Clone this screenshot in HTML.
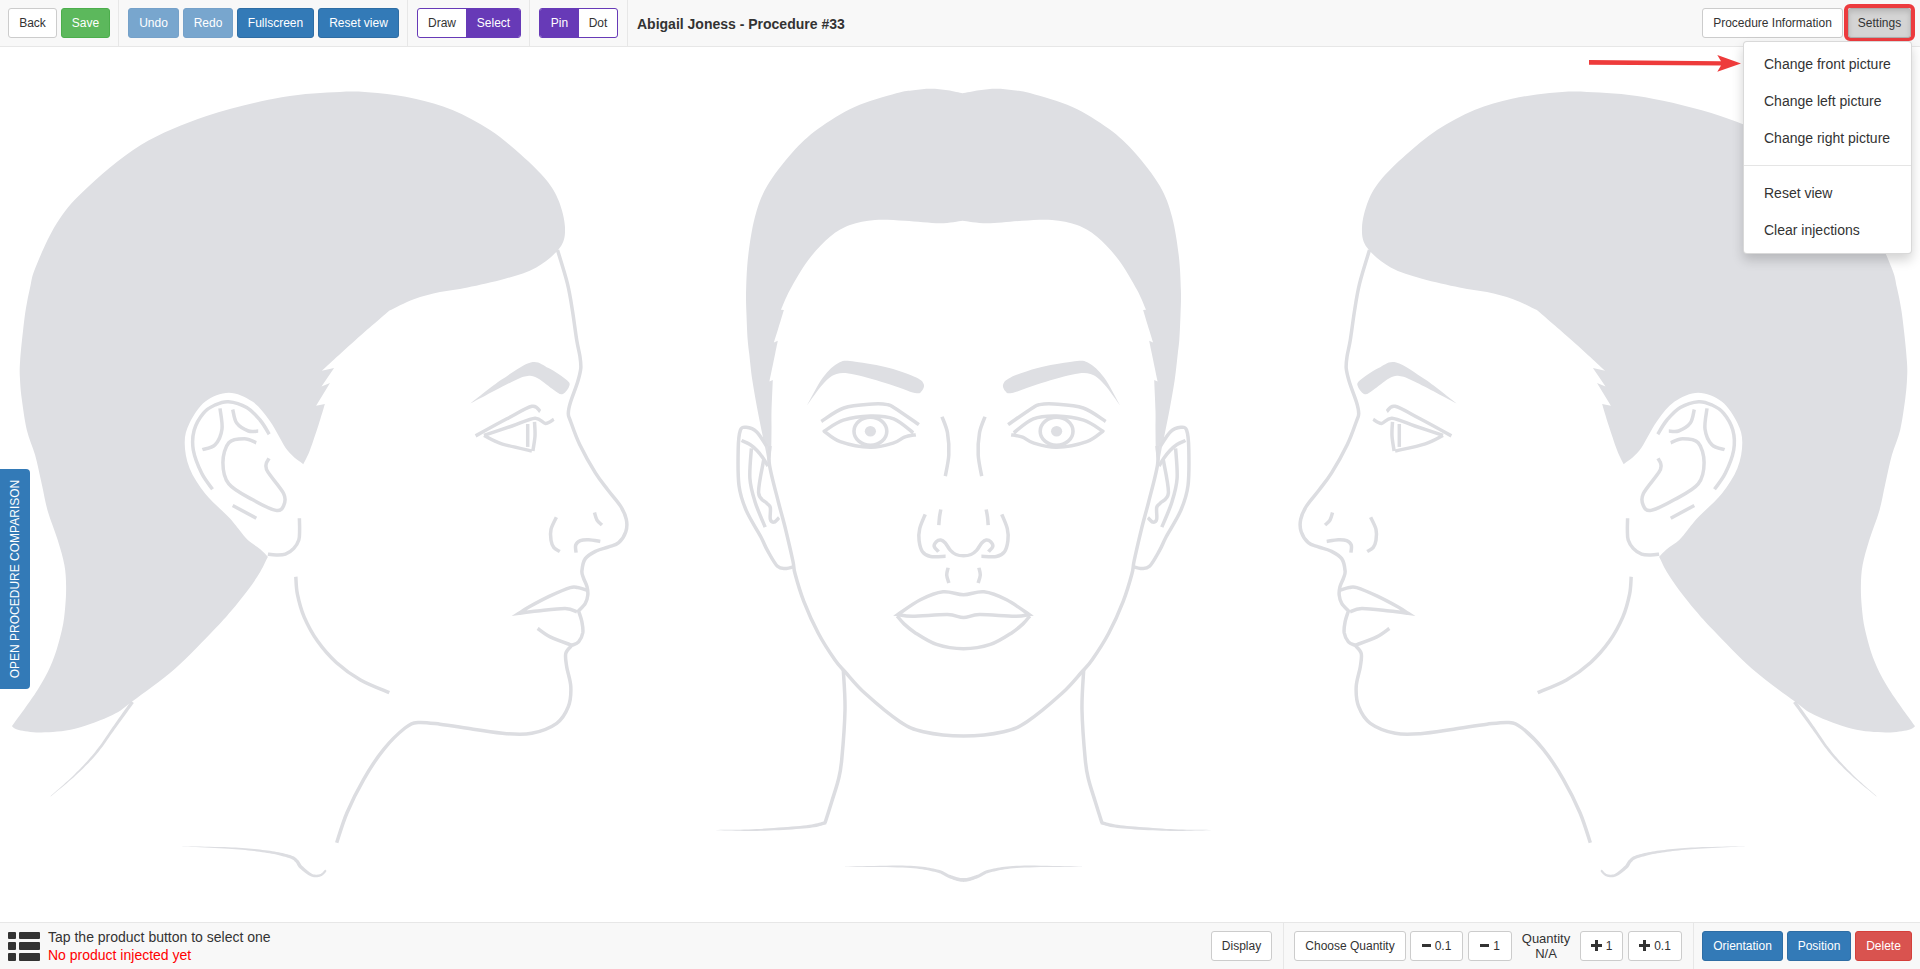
<!DOCTYPE html><html><head><meta charset="utf-8"><style>
*{box-sizing:border-box;margin:0;padding:0}
html,body{width:1920px;height:969px;overflow:hidden;background:#fff;font-family:"Liberation Sans",sans-serif;color:#333}
.bar{position:absolute;left:0;width:1920px;background:#f8f8f8}
.top{top:0;height:47px;border-bottom:1px solid #e7e7e7}
.bot{top:922px;height:47px;border-top:1px solid #e7e7e7}
.vd{position:absolute;top:0;width:1px;background:#e7e7e7}
.btn{position:absolute;height:30px;border:1px solid #ccc;border-radius:3px;background:#fff;color:#333;font-size:12px;line-height:28px;text-align:center;white-space:nowrap}
.g{background:#5cb85c;border-color:#4cae4c;color:#fff}
.p{background:#337ab7;border-color:#2e6da4;color:#fff}
.pd{background:#78a6ce;border-color:#75a1c9;color:#fff}
.r{background:#d9534f;border-color:#d43f3a;color:#fff}
.grp{position:absolute;height:30px;border:1px solid #673ab7;border-radius:3px;background:#fff;overflow:hidden;font-size:12px;line-height:28px}
.grp span{position:absolute;top:0;height:28px;text-align:center}
.pu{background:#673ab7;color:#fff}
.title{position:absolute;left:637px;top:16px;font-size:14px;font-weight:bold;color:#333;line-height:17px;white-space:nowrap}
.dd{position:absolute;left:1743px;top:41px;width:169px;height:213px;background:#fff;border:1px solid rgba(0,0,0,.15);border-radius:4px;box-shadow:0 6px 12px rgba(0,0,0,.175)}
.dd div{position:absolute;left:20px;font-size:14px;color:#333;white-space:nowrap;line-height:16px}
.dd hr{position:absolute;left:0;top:123px;width:167px;border:0;border-top:1px solid #e5e5e5}
.tab{position:absolute;left:0;top:469px;width:30px;height:220px;background:#337ab7;border-radius:0 4px 4px 0}
.tab span{position:absolute;left:15px;top:110px;transform:translate(-50%,-50%) rotate(-90deg);color:#fff;font-size:12px;white-space:nowrap;line-height:14px}
.ic{position:absolute;background:#333;border-radius:1px}
.glm{display:inline-block;width:9px;height:3px;background:#333;vertical-align:middle;position:relative;top:-1px;margin-right:4px}
.glp{display:inline-block;width:11px;height:11px;vertical-align:middle;position:relative;top:-1px;margin-right:4px;background:linear-gradient(#333,#333) center/3px 11px no-repeat,linear-gradient(#333,#333) center/11px 3px no-repeat}
</style></head><body>
<svg width="1920" height="969" viewBox="0 0 1920 969" style="position:absolute;left:0;top:0">
<g fill="none" stroke="#dcdde1" stroke-width="3.5" stroke-linecap="butt" stroke-linejoin="round">
<path fill="#dedfe3" stroke="none" d="M389.5 310.5 C383.8 315.4 366.6 330.2 355.3 340.2 C344 350.2 327.4 365.6 321.8 370.7 L334.1 367.9 L321.5 386.4 L330 383 L316.1 405.7 L324.9 404.1 C323.8 407.6 321 417.4 318.5 425 C316 432.6 312.5 443.4 310 450 C307.5 456.6 304.4 461.9 303.3 464.3 C300.7 462 293.2 457.8 287.6 450.6 C282.1 443.4 275.9 429.4 270 421.2 C264.1 413 259.3 406.4 252.4 401.6 C245.5 396.9 236.7 392.7 228.8 392.7 C221 392.7 211.8 396.5 205.3 401.6 C198.8 406.7 193 416.2 189.6 423.1 C186.2 430 184.7 435.2 184.7 442.7 C184.7 450.2 186.2 459.7 189.6 468.2 C193 476.7 198.8 485.5 205.3 493.7 C211.8 501.9 223.1 511.2 228.8 517.3 C234.5 523.3 236.2 526.2 239.4 530 C242.6 533.8 244.3 536.8 247.8 540 C251.3 543.2 257 546.4 260.3 549.2 C263.6 552 266.6 555.5 267.9 556.8 C266.6 559.3 263.6 566.2 260.3 571.8 C257 577.4 252.7 583.7 247.8 590.2 C242.9 596.7 236.8 604.4 231.1 611 C225.4 617.6 223.2 620.4 213.8 630 C204.5 639.6 188.6 656.9 175 668.8 C161.4 680.7 142.9 693.6 132.5 701.3 C122.1 709 122.1 710.4 112.5 715 C102.9 719.6 86.9 725.9 75 728.8 C63.1 731.7 50.7 732.3 41.3 732.5 C31.9 732.7 23.7 731 18.8 730 C13.9 729 13.1 726.9 11.9 726.3 C16.2 720.2 30.7 700.8 37.5 690 C44.3 679.2 48.4 671.3 52.5 661.3 C56.6 651.3 59.8 639.1 61.9 630 C64 620.9 64.5 614.2 65.2 606.9 C65.9 599.6 66.2 593 66.1 586 C66 579 65.8 572.8 64.4 565.1 C63 557.4 60.5 549 57.7 540 C54.9 531 50.4 520.3 47.7 511 C45.1 501.7 43.9 493.6 41.8 484.3 C39.7 475 37.6 464.2 35.1 455.1 C32.6 446.1 29 439.4 26.8 430 C24.6 420.6 22.9 407.2 21.7 398.5 C20.5 389.8 20.2 383.9 19.9 377.6 C19.6 371.3 19.6 368.7 20.1 360.9 C20.6 353.1 22 339.7 23 331 C24 322.3 24.7 315.7 25.9 308.5 C27.1 301.3 28.5 294.5 30.1 287.6 C31.7 280.7 31.3 277.6 35.7 267 C40.1 256.4 48.2 236.8 56.3 224 C64.4 211.2 70.4 203.3 84.5 190.2 C98.6 177 120.5 157.5 140.8 145.1 C161.2 132.7 183.1 124 206.6 116 C230.1 108 259.5 101.2 281.7 97.2 C303.9 93.2 324 92.6 340 91.9 C356 91.2 365 91.9 377.5 93.1 C390 94.2 402.5 96 415 98.8 C427.5 101.6 440 104.8 452.5 110 C465 115.2 478.5 122.5 490 130 C501.5 137.5 511.9 146.7 521.3 155 C530.7 163.3 540 172.3 546.3 180 C552.5 187.7 555.7 193.1 558.8 201 C561.9 208.9 564.8 219.8 565 227.5 C565.2 235.2 564.8 240.8 560 247.5 C555.2 254.2 545.5 262.3 536.3 267.5 C527.1 272.7 516.5 275.5 505 278.8 C493.5 282.1 478.3 285.3 467.5 287.5 C456.7 289.7 448.9 290.2 440 292.1 C431.1 294.1 422.2 296.1 413.8 299.2 C405.4 302.3 393.6 308.6 389.5 310.5Z"/>
<path fill="#dedfe3" stroke="none" d="M470.4 403.5 C475.6 399.5 491.6 386.5 501.7 379.6 C511.8 372.8 523 364.3 530.8 362.4 C538.6 360.5 542.4 365.1 548.5 368.1 C554.6 371.1 563.9 377.5 567.3 380.6 C570.7 383.7 569.8 384.6 568.9 386.9 C568 389.2 564.6 393.7 562.1 394.2 C559.6 394.7 557.8 392.6 553.8 390 C549.8 387.4 542.5 380.9 538.1 378.5 C533.8 376.1 532 375.4 527.7 375.9 C523.4 376.4 521.7 377.1 512.1 381.7 C502.6 386.3 477.3 399.9 470.4 403.5Z"/>
<path d="M212.5 489.2 C210.7 486.6 204.9 479.8 201.7 473.3 C198.5 466.8 194.6 457.2 193.3 450 C192.1 442.8 192.5 436.1 194.2 430 C195.9 423.9 199.8 417.5 203.3 413.3 C206.8 409.1 210.8 406.9 215 405 C219.2 403.1 223 401.3 228.3 401.7 C233.6 402.1 241.4 404.4 246.7 407.5 C252 410.6 256.2 415.6 260 420 C263.8 424.4 267.7 431.8 269.2 434.2" stroke-linejoin="miter" stroke-miterlimit="7"/>
<path d="M220 408.4 C220.3 411.8 222.8 422.9 222 429 C221.2 435.1 218.4 441.3 215.1 444.7 C211.8 448.1 204.5 448.8 202.4 449.6" stroke-linejoin="miter" stroke-miterlimit="7"/>
<path d="M232.7 409.4 C233.4 411.7 234.1 419.5 236.7 423.1 C239.3 426.7 244.8 429.7 248.4 431 C252 432.3 256.6 431 258.2 431" stroke-linejoin="miter" stroke-miterlimit="7"/>
<path d="M256.3 442.7 C254.3 442.1 249.1 438.8 244.5 438.8 C239.9 438.8 232.4 438.8 228.8 442.7 C225.2 446.6 222.9 455.5 222.9 462.4 C222.9 469.3 223.9 477.7 228.8 483.9 C233.7 490.1 244.6 495.2 252.4 499.6 C260.2 504 270.7 509.4 275.9 510.4 C281.1 511.4 282.4 508.3 283.7 505.5 C285 502.7 286.3 499.2 283.7 493.7 C281.1 488.1 270.9 477.1 268 472.2 C265.1 467.3 265.9 466.6 266.1 464.3 C266.3 462 268.5 459.4 269 458.4" stroke-linejoin="miter" stroke-miterlimit="7"/>
<path d="M232.7 505.5 L256.3 518.2" stroke-linejoin="miter" stroke-miterlimit="7"/>
<path d="M299.4 518.2 C299.4 520.2 299.7 526.4 299.6 530 C299.5 533.6 299.8 536.9 298.8 540 C297.8 543.1 296 546 293.8 548.4 C291.6 550.8 288.3 553.1 285.4 554.2 C282.5 555.3 279.1 555.1 276.2 555.1 C273.3 555.1 269.3 554.4 267.9 554.2" stroke-linejoin="miter" stroke-miterlimit="7"/>
<path d="M475.6 435.9 C480.8 433 497.5 423.7 506.9 418.8 C516.3 413.9 526.3 407.5 531.9 406.3 C537.5 405.1 538.8 410.6 540.2 411.5" stroke-linejoin="miter" stroke-miterlimit="7"/>
<path d="M484 435.4 C488.7 433.8 503.6 428.9 512.1 426 C520.6 423.1 529.5 418.6 535 418.2 C540.5 417.8 542.3 423.2 545.4 423.4 C548.5 423.6 552.4 420 553.8 419.3" stroke-linejoin="miter" stroke-miterlimit="7"/>
<path d="M484 435.4 C486.9 436.8 493.7 441.2 501.7 443.8 C509.7 446.4 526.9 449.8 531.9 451" stroke-linejoin="miter" stroke-miterlimit="7"/>
<path d="M527.7 424 L527.7 446.9" stroke-linejoin="miter" stroke-miterlimit="7"/>
<path d="M534.5 421.9 C534.6 424.2 535.3 431.1 535 436 C534.7 440.9 533.2 448.5 532.9 451" stroke-linejoin="miter" stroke-miterlimit="7"/>
<path d="M557.5 250 C559.2 255.6 565 273.6 567.5 283.8 C570 294 571 301.6 572.5 311 C574 320.4 575.5 332.6 576.7 340 C577.9 347.4 579.1 350.9 579.8 355.6 C580.5 360.3 581.1 363.8 580.8 368.1 C580.4 372.5 579.4 376 577.7 381.7 C576 387.4 572 397.2 570.4 402.5 C568.8 407.8 568.3 410.4 568.3 413.5 C568.3 416.6 568.5 415.6 570.4 420.8 C572.3 426 575.6 436.1 579.8 444.8 C584 453.5 590.7 465.4 595.4 472.9 C600.1 480.4 603.7 484.5 607.9 490 C612.1 495.5 617.3 501 620.4 505.9 C623.5 510.8 625.4 515 626.3 519.3 C627.2 523.6 627.1 527.9 625.8 531.8 C624.5 535.7 621.6 540.2 618.7 542.7 C615.9 545.2 612.5 545.5 608.7 546.9 C605 548.3 600.1 549 596.2 551 C592.3 553 587.7 555.3 585.3 558.6 C582.9 561.9 582.2 567.7 581.9 571 C581.6 574.3 582.8 575.8 583.6 578.4 C584.5 581 586.3 583.9 587 586.7 C587.7 589.5 588.1 592.3 587.8 595.1 C587.5 597.9 586.8 600.8 585.3 603.4 C583.8 606 579.7 609.7 578.6 611 C579.1 612.8 581.2 618.2 581.9 621.8 C582.6 625.4 583.3 629.4 582.8 632.7 C582.2 636.1 580.4 639.8 578.6 641.9 C576.8 644 573 644.7 571.9 645.3 C570.9 646.6 566.7 649.7 565.8 653.3 C564.9 656.9 565.9 661.1 566.7 666.7 C567.5 672.3 570.5 680 570.8 686.7 C571.1 693.4 570.6 700.6 568.3 706.7 C565.9 712.8 562.8 718.9 556.7 723.3 C550.6 727.7 540 731.6 531.7 733.3 C523.4 735 516.4 734.4 506.7 733.7 C497 733 484.4 730.8 473.3 729.2 C462.2 727.6 449.2 725.3 440 724.2 C430.8 723.1 423.8 721.9 418 722.5 C412.2 723.1 410.7 723.5 405 728 C399.3 732.5 390.6 740.8 383.7 749.3 C376.8 757.8 369.8 768.7 363.7 779.3 C357.6 789.9 351.5 802.1 347 812.7 C342.5 823.3 338.4 837.7 336.7 842.7" stroke-linejoin="miter" stroke-miterlimit="7"/>
<path d="M556.4 517.2 C555.5 519.2 551.9 525.5 551 529.3 C550.1 533.1 550.5 537.1 551 540.2 C551.5 543.3 552.4 545.8 553.9 547.7 C555.4 549.6 558.8 550.9 559.8 551.5" stroke-linejoin="miter" stroke-miterlimit="7"/>
<path d="M594.5 512.6 C594.9 513.9 595.8 518 597 520.1 C598.2 522.2 601.2 524.3 602 525.1" stroke-linejoin="miter" stroke-miterlimit="7"/>
<path d="M576.1 552.7 C576 551.5 575 547.2 575.7 545.2 C576.4 543.2 578.1 541.5 580.3 540.6 C582.4 539.7 585.3 539.6 588.6 539.7 C591.9 539.8 598.3 541.1 600.3 541.4" stroke-linejoin="miter" stroke-miterlimit="7"/>
<path d="M586.5 590.1 C585 589.7 580.5 588 577.8 587.6 C575.1 587.2 574.8 586.2 570.2 587.6 C565.6 589 557 592.7 550.2 595.9 C543.4 599.1 534.5 603.9 529.3 606.8 C524.1 609.7 520.7 612.2 519 613.3 C522.1 612.9 529.9 611.8 537.6 611 C545.3 610.2 558.7 608.4 565.2 608.5 C571.8 608.6 575 611.2 576.9 611.8" stroke-linejoin="miter" stroke-miterlimit="7"/>
<path d="M537.6 628.5 C539.7 629.9 544.9 634.2 550.2 636.9 C555.5 639.5 565.6 643 569.4 644.4 C573.1 645.8 572.2 645.1 572.7 645.3" stroke-linejoin="miter" stroke-miterlimit="7"/>
<path d="M295.8 576.7 C296.1 579.6 296 587.4 297.4 594.1 C298.8 600.8 300.8 609.1 304.1 616.9 C307.5 624.7 312.1 633.5 317.5 641.1 C322.9 648.7 329.1 656 336.3 662.5 C343.5 669 351.7 675 360.5 680 C369.3 685 384.5 690.6 389.3 692.7" stroke-linejoin="miter" stroke-miterlimit="7"/>
<path fill="#dcdde1" stroke="none" d="M131.1 700.9 L130.3 702.1 L129.2 703.6 L128 705.3 L126.7 707.2 L125.2 709.3 L123.6 711.5 L122 713.8 L120.3 716.2 L118.6 718.6 L116.9 720.9 L115.3 723.2 L113.8 725.4 L112.3 727.6 L110.8 729.8 L109.3 732 L107.8 734.2 L106.2 736.5 L104.7 738.7 L103.2 741 L101.7 743.2 L100.1 745.4 L98.5 747.5 L96.9 749.6 L95.3 751.7 L93.7 753.7 L92 755.7 L90.4 757.6 L88.7 759.6 L87 761.5 L85.3 763.3 L83.5 765.2 L81.8 767.1 L80 768.9 L78.2 770.8 L76.3 772.6 L74.5 774.5 L72.5 776.4 L70.4 778.4 L68.2 780.5 L65.8 782.6 L63.5 784.7 L61.2 786.7 L59 788.7 L56.8 790.6 L54.9 792.3 L53.2 793.8 L51.7 795.1 L50.5 796.2 L50.7 796.4 L51.9 795.4 L53.4 794.2 L55.2 792.7 L57.2 791.1 L59.4 789.3 L61.7 787.4 L64.1 785.4 L66.5 783.4 L68.9 781.3 L71.3 779.3 L73.5 777.4 L75.5 775.5 L77.4 773.7 L79.3 772 L81.2 770.2 L83.1 768.4 L84.9 766.6 L86.7 764.8 L88.6 762.9 L90.3 761.1 L92.1 759.2 L93.9 757.3 L95.6 755.3 L97.3 753.3 L99 751.3 L100.6 749.1 L102.3 747 L103.9 744.8 L105.5 742.6 L107 740.3 L108.6 738.1 L110.1 735.8 L111.7 733.6 L113.2 731.4 L114.7 729.3 L116.2 727.2 L117.8 725 L119.4 722.7 L121.1 720.4 L122.9 718.1 L124.6 715.7 L126.2 713.4 L127.8 711.2 L129.3 709.1 L130.7 707.2 L132 705.5 L133 704.1 L133.9 702.9Z"/>
<path fill="#dcdde1" stroke="none" d="M182.4 846.5 L184.8 846.6 L188 846.7 L191.6 846.9 L195.8 847.1 L200.3 847.3 L205 847.5 L209.8 847.7 L214.7 847.9 L219.4 848.2 L224 848.4 L228.2 848.7 L232 848.9 L235.4 849.2 L238.8 849.5 L242.1 849.8 L245.3 850.1 L248.3 850.4 L251.3 850.7 L254.2 851.1 L257 851.4 L259.7 851.8 L262.3 852.2 L264.8 852.5 L267.2 852.9 L269.6 853.3 L271.8 853.7 L274 854.1 L276.1 854.6 L278.1 855 L280 855.5 L281.7 855.9 L283.4 856.4 L285 856.8 L286.5 857.3 L287.9 857.7 L289.1 858.1 L290.2 858.5 L291.1 858.8 L291.8 859.2 L292.4 859.5 L292.9 859.8 L293.3 860 L293.6 860.3 L294 860.6 L294.3 861 L294.7 861.4 L295.1 861.8 L295.5 862.2 L295.9 862.6 L296.1 862.9 L296.4 863.3 L296.6 863.7 L296.9 864.2 L297.1 864.7 L297.4 865.3 L297.8 865.9 L298.2 866.5 L298.6 867.2 L299.2 867.8 L299.9 868.5 L300.6 869.1 L301.4 869.8 L302.2 870.5 L303.2 871.3 L304.1 872.1 L305.1 872.8 L306.1 873.6 L307.2 874.3 L308.2 875 L309.2 875.6 L310.2 876.1 L311.2 876.5 L312.1 876.8 L313 877.1 L313.9 877.2 L314.8 877.3 L315.7 877.3 L316.5 877.3 L317.4 877.2 L318.2 877.1 L318.9 876.9 L319.6 876.8 L320.3 876.6 L321 876.3 L321.7 876 L322.4 875.6 L323 875.1 L323.6 874.6 L324.1 874 L324.6 873.5 L325.1 872.9 L325.5 872.4 L325.8 872 L326.1 871.5 L326.4 871.2 L326.6 871 L325.2 869.6 L324.9 869.9 L324.6 870.2 L324.2 870.6 L323.8 871.1 L323.4 871.5 L323 872 L322.5 872.5 L322.1 872.9 L321.6 873.3 L321.1 873.6 L320.7 873.9 L320.2 874.1 L319.6 874.2 L319 874.4 L318.4 874.5 L317.8 874.6 L317.1 874.7 L316.4 874.7 L315.7 874.7 L315 874.6 L314.3 874.5 L313.6 874.4 L312.9 874.2 L312.2 873.9 L311.5 873.5 L310.7 873 L309.9 872.5 L309 871.8 L308 871.1 L307.1 870.3 L306.2 869.6 L305.3 868.8 L304.5 868 L303.7 867.2 L303 866.5 L302.3 865.9 L301.8 865.4 L301.4 864.9 L301.1 864.5 L300.8 864 L300.5 863.5 L300.2 863 L299.9 862.5 L299.6 862 L299.3 861.4 L298.9 860.9 L298.4 860.3 L297.9 859.8 L297.4 859.4 L297 859 L296.6 858.6 L296.2 858.2 L295.8 857.8 L295.2 857.4 L294.6 857 L294 856.6 L293.2 856.2 L292.3 855.9 L291.3 855.5 L290.1 855.1 L288.8 854.7 L287.3 854.3 L285.8 853.9 L284.2 853.5 L282.4 853.1 L280.6 852.7 L278.6 852.3 L276.6 851.9 L274.5 851.5 L272.3 851.2 L270 850.8 L267.6 850.5 L265.1 850.2 L262.6 849.9 L259.9 849.6 L257.2 849.3 L254.4 849 L251.5 848.8 L248.5 848.5 L245.4 848.3 L242.2 848 L238.9 847.8 L235.5 847.6 L232 847.5 L228.2 847.3 L224 847.1 L219.5 847 L214.7 846.9 L209.8 846.8 L205 846.7 L200.3 846.6 L195.8 846.5 L191.7 846.5 L188 846.4 L184.8 846.3 L182.4 846.3Z"/>
<g transform="translate(1927.0,0) scale(-1,1)">
<path fill="#dedfe3" stroke="none" d="M389.5 310.5 C383.8 315.4 366.6 330.2 355.3 340.2 C344 350.2 327.4 365.6 321.8 370.7 L334.1 367.9 L321.5 386.4 L330 383 L316.1 405.7 L324.9 404.1 C323.8 407.6 321 417.4 318.5 425 C316 432.6 312.5 443.4 310 450 C307.5 456.6 304.4 461.9 303.3 464.3 C300.7 462 293.2 457.8 287.6 450.6 C282.1 443.4 275.9 429.4 270 421.2 C264.1 413 259.3 406.4 252.4 401.6 C245.5 396.9 236.7 392.7 228.8 392.7 C221 392.7 211.8 396.5 205.3 401.6 C198.8 406.7 193 416.2 189.6 423.1 C186.2 430 184.7 435.2 184.7 442.7 C184.7 450.2 186.2 459.7 189.6 468.2 C193 476.7 198.8 485.5 205.3 493.7 C211.8 501.9 223.1 511.2 228.8 517.3 C234.5 523.3 236.2 526.2 239.4 530 C242.6 533.8 244.3 536.8 247.8 540 C251.3 543.2 257 546.4 260.3 549.2 C263.6 552 266.6 555.5 267.9 556.8 C266.6 559.3 263.6 566.2 260.3 571.8 C257 577.4 252.7 583.7 247.8 590.2 C242.9 596.7 236.8 604.4 231.1 611 C225.4 617.6 223.2 620.4 213.8 630 C204.5 639.6 188.6 656.9 175 668.8 C161.4 680.7 142.9 693.6 132.5 701.3 C122.1 709 122.1 710.4 112.5 715 C102.9 719.6 86.9 725.9 75 728.8 C63.1 731.7 50.7 732.3 41.3 732.5 C31.9 732.7 23.7 731 18.8 730 C13.9 729 13.1 726.9 11.9 726.3 C16.2 720.2 30.7 700.8 37.5 690 C44.3 679.2 48.4 671.3 52.5 661.3 C56.6 651.3 59.8 639.1 61.9 630 C64 620.9 64.5 614.2 65.2 606.9 C65.9 599.6 66.2 593 66.1 586 C66 579 65.8 572.8 64.4 565.1 C63 557.4 60.5 549 57.7 540 C54.9 531 50.4 520.3 47.7 511 C45.1 501.7 43.9 493.6 41.8 484.3 C39.7 475 37.6 464.2 35.1 455.1 C32.6 446.1 29 439.4 26.8 430 C24.6 420.6 22.9 407.2 21.7 398.5 C20.5 389.8 20.2 383.9 19.9 377.6 C19.6 371.3 19.6 368.7 20.1 360.9 C20.6 353.1 22 339.7 23 331 C24 322.3 24.7 315.7 25.9 308.5 C27.1 301.3 28.5 294.5 30.1 287.6 C31.7 280.7 31.3 277.6 35.7 267 C40.1 256.4 48.2 236.8 56.3 224 C64.4 211.2 70.4 203.3 84.5 190.2 C98.6 177 120.5 157.5 140.8 145.1 C161.2 132.7 183.1 124 206.6 116 C230.1 108 259.5 101.2 281.7 97.2 C303.9 93.2 324 92.6 340 91.9 C356 91.2 365 91.9 377.5 93.1 C390 94.2 402.5 96 415 98.8 C427.5 101.6 440 104.8 452.5 110 C465 115.2 478.5 122.5 490 130 C501.5 137.5 511.9 146.7 521.3 155 C530.7 163.3 540 172.3 546.3 180 C552.5 187.7 555.7 193.1 558.8 201 C561.9 208.9 564.8 219.8 565 227.5 C565.2 235.2 564.8 240.8 560 247.5 C555.2 254.2 545.5 262.3 536.3 267.5 C527.1 272.7 516.5 275.5 505 278.8 C493.5 282.1 478.3 285.3 467.5 287.5 C456.7 289.7 448.9 290.2 440 292.1 C431.1 294.1 422.2 296.1 413.8 299.2 C405.4 302.3 393.6 308.6 389.5 310.5Z"/>
<path fill="#dedfe3" stroke="none" d="M470.4 403.5 C475.6 399.5 491.6 386.5 501.7 379.6 C511.8 372.8 523 364.3 530.8 362.4 C538.6 360.5 542.4 365.1 548.5 368.1 C554.6 371.1 563.9 377.5 567.3 380.6 C570.7 383.7 569.8 384.6 568.9 386.9 C568 389.2 564.6 393.7 562.1 394.2 C559.6 394.7 557.8 392.6 553.8 390 C549.8 387.4 542.5 380.9 538.1 378.5 C533.8 376.1 532 375.4 527.7 375.9 C523.4 376.4 521.7 377.1 512.1 381.7 C502.6 386.3 477.3 399.9 470.4 403.5Z"/>
<path d="M212.5 489.2 C210.7 486.6 204.9 479.8 201.7 473.3 C198.5 466.8 194.6 457.2 193.3 450 C192.1 442.8 192.5 436.1 194.2 430 C195.9 423.9 199.8 417.5 203.3 413.3 C206.8 409.1 210.8 406.9 215 405 C219.2 403.1 223 401.3 228.3 401.7 C233.6 402.1 241.4 404.4 246.7 407.5 C252 410.6 256.2 415.6 260 420 C263.8 424.4 267.7 431.8 269.2 434.2" stroke-linejoin="miter" stroke-miterlimit="7"/>
<path d="M220 408.4 C220.3 411.8 222.8 422.9 222 429 C221.2 435.1 218.4 441.3 215.1 444.7 C211.8 448.1 204.5 448.8 202.4 449.6" stroke-linejoin="miter" stroke-miterlimit="7"/>
<path d="M232.7 409.4 C233.4 411.7 234.1 419.5 236.7 423.1 C239.3 426.7 244.8 429.7 248.4 431 C252 432.3 256.6 431 258.2 431" stroke-linejoin="miter" stroke-miterlimit="7"/>
<path d="M256.3 442.7 C254.3 442.1 249.1 438.8 244.5 438.8 C239.9 438.8 232.4 438.8 228.8 442.7 C225.2 446.6 222.9 455.5 222.9 462.4 C222.9 469.3 223.9 477.7 228.8 483.9 C233.7 490.1 244.6 495.2 252.4 499.6 C260.2 504 270.7 509.4 275.9 510.4 C281.1 511.4 282.4 508.3 283.7 505.5 C285 502.7 286.3 499.2 283.7 493.7 C281.1 488.1 270.9 477.1 268 472.2 C265.1 467.3 265.9 466.6 266.1 464.3 C266.3 462 268.5 459.4 269 458.4" stroke-linejoin="miter" stroke-miterlimit="7"/>
<path d="M232.7 505.5 L256.3 518.2" stroke-linejoin="miter" stroke-miterlimit="7"/>
<path d="M299.4 518.2 C299.4 520.2 299.7 526.4 299.6 530 C299.5 533.6 299.8 536.9 298.8 540 C297.8 543.1 296 546 293.8 548.4 C291.6 550.8 288.3 553.1 285.4 554.2 C282.5 555.3 279.1 555.1 276.2 555.1 C273.3 555.1 269.3 554.4 267.9 554.2" stroke-linejoin="miter" stroke-miterlimit="7"/>
<path d="M475.6 435.9 C480.8 433 497.5 423.7 506.9 418.8 C516.3 413.9 526.3 407.5 531.9 406.3 C537.5 405.1 538.8 410.6 540.2 411.5" stroke-linejoin="miter" stroke-miterlimit="7"/>
<path d="M484 435.4 C488.7 433.8 503.6 428.9 512.1 426 C520.6 423.1 529.5 418.6 535 418.2 C540.5 417.8 542.3 423.2 545.4 423.4 C548.5 423.6 552.4 420 553.8 419.3" stroke-linejoin="miter" stroke-miterlimit="7"/>
<path d="M484 435.4 C486.9 436.8 493.7 441.2 501.7 443.8 C509.7 446.4 526.9 449.8 531.9 451" stroke-linejoin="miter" stroke-miterlimit="7"/>
<path d="M527.7 424 L527.7 446.9" stroke-linejoin="miter" stroke-miterlimit="7"/>
<path d="M534.5 421.9 C534.6 424.2 535.3 431.1 535 436 C534.7 440.9 533.2 448.5 532.9 451" stroke-linejoin="miter" stroke-miterlimit="7"/>
<path d="M557.5 250 C559.2 255.6 565 273.6 567.5 283.8 C570 294 571 301.6 572.5 311 C574 320.4 575.5 332.6 576.7 340 C577.9 347.4 579.1 350.9 579.8 355.6 C580.5 360.3 581.1 363.8 580.8 368.1 C580.4 372.5 579.4 376 577.7 381.7 C576 387.4 572 397.2 570.4 402.5 C568.8 407.8 568.3 410.4 568.3 413.5 C568.3 416.6 568.5 415.6 570.4 420.8 C572.3 426 575.6 436.1 579.8 444.8 C584 453.5 590.7 465.4 595.4 472.9 C600.1 480.4 603.7 484.5 607.9 490 C612.1 495.5 617.3 501 620.4 505.9 C623.5 510.8 625.4 515 626.3 519.3 C627.2 523.6 627.1 527.9 625.8 531.8 C624.5 535.7 621.6 540.2 618.7 542.7 C615.9 545.2 612.5 545.5 608.7 546.9 C605 548.3 600.1 549 596.2 551 C592.3 553 587.7 555.3 585.3 558.6 C582.9 561.9 582.2 567.7 581.9 571 C581.6 574.3 582.8 575.8 583.6 578.4 C584.5 581 586.3 583.9 587 586.7 C587.7 589.5 588.1 592.3 587.8 595.1 C587.5 597.9 586.8 600.8 585.3 603.4 C583.8 606 579.7 609.7 578.6 611 C579.1 612.8 581.2 618.2 581.9 621.8 C582.6 625.4 583.3 629.4 582.8 632.7 C582.2 636.1 580.4 639.8 578.6 641.9 C576.8 644 573 644.7 571.9 645.3 C570.9 646.6 566.7 649.7 565.8 653.3 C564.9 656.9 565.9 661.1 566.7 666.7 C567.5 672.3 570.5 680 570.8 686.7 C571.1 693.4 570.6 700.6 568.3 706.7 C565.9 712.8 562.8 718.9 556.7 723.3 C550.6 727.7 540 731.6 531.7 733.3 C523.4 735 516.4 734.4 506.7 733.7 C497 733 484.4 730.8 473.3 729.2 C462.2 727.6 449.2 725.3 440 724.2 C430.8 723.1 423.8 721.9 418 722.5 C412.2 723.1 410.7 723.5 405 728 C399.3 732.5 390.6 740.8 383.7 749.3 C376.8 757.8 369.8 768.7 363.7 779.3 C357.6 789.9 351.5 802.1 347 812.7 C342.5 823.3 338.4 837.7 336.7 842.7" stroke-linejoin="miter" stroke-miterlimit="7"/>
<path d="M556.4 517.2 C555.5 519.2 551.9 525.5 551 529.3 C550.1 533.1 550.5 537.1 551 540.2 C551.5 543.3 552.4 545.8 553.9 547.7 C555.4 549.6 558.8 550.9 559.8 551.5" stroke-linejoin="miter" stroke-miterlimit="7"/>
<path d="M594.5 512.6 C594.9 513.9 595.8 518 597 520.1 C598.2 522.2 601.2 524.3 602 525.1" stroke-linejoin="miter" stroke-miterlimit="7"/>
<path d="M576.1 552.7 C576 551.5 575 547.2 575.7 545.2 C576.4 543.2 578.1 541.5 580.3 540.6 C582.4 539.7 585.3 539.6 588.6 539.7 C591.9 539.8 598.3 541.1 600.3 541.4" stroke-linejoin="miter" stroke-miterlimit="7"/>
<path d="M586.5 590.1 C585 589.7 580.5 588 577.8 587.6 C575.1 587.2 574.8 586.2 570.2 587.6 C565.6 589 557 592.7 550.2 595.9 C543.4 599.1 534.5 603.9 529.3 606.8 C524.1 609.7 520.7 612.2 519 613.3 C522.1 612.9 529.9 611.8 537.6 611 C545.3 610.2 558.7 608.4 565.2 608.5 C571.8 608.6 575 611.2 576.9 611.8" stroke-linejoin="miter" stroke-miterlimit="7"/>
<path d="M537.6 628.5 C539.7 629.9 544.9 634.2 550.2 636.9 C555.5 639.5 565.6 643 569.4 644.4 C573.1 645.8 572.2 645.1 572.7 645.3" stroke-linejoin="miter" stroke-miterlimit="7"/>
<path d="M295.8 576.7 C296.1 579.6 296 587.4 297.4 594.1 C298.8 600.8 300.8 609.1 304.1 616.9 C307.5 624.7 312.1 633.5 317.5 641.1 C322.9 648.7 329.1 656 336.3 662.5 C343.5 669 351.7 675 360.5 680 C369.3 685 384.5 690.6 389.3 692.7" stroke-linejoin="miter" stroke-miterlimit="7"/>
<path fill="#dcdde1" stroke="none" d="M131.1 700.9 L130.3 702.1 L129.2 703.6 L128 705.3 L126.7 707.2 L125.2 709.3 L123.6 711.5 L122 713.8 L120.3 716.2 L118.6 718.6 L116.9 720.9 L115.3 723.2 L113.8 725.4 L112.3 727.6 L110.8 729.8 L109.3 732 L107.8 734.2 L106.2 736.5 L104.7 738.7 L103.2 741 L101.7 743.2 L100.1 745.4 L98.5 747.5 L96.9 749.6 L95.3 751.7 L93.7 753.7 L92 755.7 L90.4 757.6 L88.7 759.6 L87 761.5 L85.3 763.3 L83.5 765.2 L81.8 767.1 L80 768.9 L78.2 770.8 L76.3 772.6 L74.5 774.5 L72.5 776.4 L70.4 778.4 L68.2 780.5 L65.8 782.6 L63.5 784.7 L61.2 786.7 L59 788.7 L56.8 790.6 L54.9 792.3 L53.2 793.8 L51.7 795.1 L50.5 796.2 L50.7 796.4 L51.9 795.4 L53.4 794.2 L55.2 792.7 L57.2 791.1 L59.4 789.3 L61.7 787.4 L64.1 785.4 L66.5 783.4 L68.9 781.3 L71.3 779.3 L73.5 777.4 L75.5 775.5 L77.4 773.7 L79.3 772 L81.2 770.2 L83.1 768.4 L84.9 766.6 L86.7 764.8 L88.6 762.9 L90.3 761.1 L92.1 759.2 L93.9 757.3 L95.6 755.3 L97.3 753.3 L99 751.3 L100.6 749.1 L102.3 747 L103.9 744.8 L105.5 742.6 L107 740.3 L108.6 738.1 L110.1 735.8 L111.7 733.6 L113.2 731.4 L114.7 729.3 L116.2 727.2 L117.8 725 L119.4 722.7 L121.1 720.4 L122.9 718.1 L124.6 715.7 L126.2 713.4 L127.8 711.2 L129.3 709.1 L130.7 707.2 L132 705.5 L133 704.1 L133.9 702.9Z"/>
<path fill="#dcdde1" stroke="none" d="M182.4 846.5 L184.8 846.6 L188 846.7 L191.6 846.9 L195.8 847.1 L200.3 847.3 L205 847.5 L209.8 847.7 L214.7 847.9 L219.4 848.2 L224 848.4 L228.2 848.7 L232 848.9 L235.4 849.2 L238.8 849.5 L242.1 849.8 L245.3 850.1 L248.3 850.4 L251.3 850.7 L254.2 851.1 L257 851.4 L259.7 851.8 L262.3 852.2 L264.8 852.5 L267.2 852.9 L269.6 853.3 L271.8 853.7 L274 854.1 L276.1 854.6 L278.1 855 L280 855.5 L281.7 855.9 L283.4 856.4 L285 856.8 L286.5 857.3 L287.9 857.7 L289.1 858.1 L290.2 858.5 L291.1 858.8 L291.8 859.2 L292.4 859.5 L292.9 859.8 L293.3 860 L293.6 860.3 L294 860.6 L294.3 861 L294.7 861.4 L295.1 861.8 L295.5 862.2 L295.9 862.6 L296.1 862.9 L296.4 863.3 L296.6 863.7 L296.9 864.2 L297.1 864.7 L297.4 865.3 L297.8 865.9 L298.2 866.5 L298.6 867.2 L299.2 867.8 L299.9 868.5 L300.6 869.1 L301.4 869.8 L302.2 870.5 L303.2 871.3 L304.1 872.1 L305.1 872.8 L306.1 873.6 L307.2 874.3 L308.2 875 L309.2 875.6 L310.2 876.1 L311.2 876.5 L312.1 876.8 L313 877.1 L313.9 877.2 L314.8 877.3 L315.7 877.3 L316.5 877.3 L317.4 877.2 L318.2 877.1 L318.9 876.9 L319.6 876.8 L320.3 876.6 L321 876.3 L321.7 876 L322.4 875.6 L323 875.1 L323.6 874.6 L324.1 874 L324.6 873.5 L325.1 872.9 L325.5 872.4 L325.8 872 L326.1 871.5 L326.4 871.2 L326.6 871 L325.2 869.6 L324.9 869.9 L324.6 870.2 L324.2 870.6 L323.8 871.1 L323.4 871.5 L323 872 L322.5 872.5 L322.1 872.9 L321.6 873.3 L321.1 873.6 L320.7 873.9 L320.2 874.1 L319.6 874.2 L319 874.4 L318.4 874.5 L317.8 874.6 L317.1 874.7 L316.4 874.7 L315.7 874.7 L315 874.6 L314.3 874.5 L313.6 874.4 L312.9 874.2 L312.2 873.9 L311.5 873.5 L310.7 873 L309.9 872.5 L309 871.8 L308 871.1 L307.1 870.3 L306.2 869.6 L305.3 868.8 L304.5 868 L303.7 867.2 L303 866.5 L302.3 865.9 L301.8 865.4 L301.4 864.9 L301.1 864.5 L300.8 864 L300.5 863.5 L300.2 863 L299.9 862.5 L299.6 862 L299.3 861.4 L298.9 860.9 L298.4 860.3 L297.9 859.8 L297.4 859.4 L297 859 L296.6 858.6 L296.2 858.2 L295.8 857.8 L295.2 857.4 L294.6 857 L294 856.6 L293.2 856.2 L292.3 855.9 L291.3 855.5 L290.1 855.1 L288.8 854.7 L287.3 854.3 L285.8 853.9 L284.2 853.5 L282.4 853.1 L280.6 852.7 L278.6 852.3 L276.6 851.9 L274.5 851.5 L272.3 851.2 L270 850.8 L267.6 850.5 L265.1 850.2 L262.6 849.9 L259.9 849.6 L257.2 849.3 L254.4 849 L251.5 848.8 L248.5 848.5 L245.4 848.3 L242.2 848 L238.9 847.8 L235.5 847.6 L232 847.5 L228.2 847.3 L224 847.1 L219.5 847 L214.7 846.9 L209.8 846.8 L205 846.7 L200.3 846.6 L195.8 846.5 L191.7 846.5 L188 846.4 L184.8 846.3 L182.4 846.3Z"/>
</g>
<path fill="#dedfe3" stroke="none" d="M962.6 93.3 C960.1 92.8 953 91 947.7 90.2 C942.4 89.5 936.3 88.8 930.6 88.8 C924.9 88.8 919.3 89.5 913.6 90.2 C907.9 91 906.1 90.5 896.3 93.3 C886.5 96.1 867.6 101 854.6 106.9 C841.6 112.8 828.6 121.2 818.2 128.8 C807.8 136.4 800.6 143.2 792.1 152.7 C783.6 162.2 773.3 175.3 767.1 186 C760.9 196.7 758.1 205.2 755 216.7 C751.9 228.2 749.8 242.8 748.3 255 C746.8 267.2 746.4 280 746.1 290 C745.8 300 746.2 306.7 746.5 315 C746.8 323.3 747.2 333.6 747.7 340 C748.2 346.4 748.4 346.7 749.2 353.4 C750 360.1 750.9 370.6 752.3 380 C753.7 389.4 755.8 400.8 757.5 410 C759.2 419.2 761.1 428 762.5 435 C763.9 442 765 446.7 766 452 C767 457.3 768.1 464.5 768.5 467 C768.9 464.5 770.5 458.2 771 452 C771.5 445.8 771.4 436.8 771.5 430 C771.6 423.2 771.3 419.5 771.5 411.2 C771.7 402.9 772.6 385.3 772.8 380.1 L769.4 381.5 C770.4 376.8 773.8 360.2 775.2 353.4 C776.6 346.6 777.4 342.8 777.8 340.7 L773.9 342.5 C774.5 340.4 776.1 335.4 777.8 330 C779.5 324.6 782.9 313.3 783.9 310 L781 309.8 C782.5 306.5 785.4 298.3 789.9 290 C794.4 281.7 801.6 268.9 808.3 260 C815 251.1 823 242.5 830 236.7 C837 230.9 842.5 227.8 850 225 C857.5 222.2 865.8 220.7 875 220 C884.2 219.3 894.2 220.2 905 220.8 C915.8 221.4 930.4 223.3 940 223.3 C949.6 223.3 958.8 221.2 962.5 220.8 C966.6 221.2 977.1 223.3 987 223.3 C996.9 223.3 1011.2 221.4 1022 220.8 C1032.8 220.2 1042.8 219.3 1052 220 C1061.2 220.7 1069.5 222.2 1077 225 C1084.5 227.8 1090 230.9 1097 236.7 C1104 242.5 1112 251.1 1118.7 260 C1125.4 268.9 1132.5 281.7 1137.1 290 C1141.6 298.3 1144.5 306.5 1146 309.8 L1143.1 310 C1144.1 313.3 1147.5 324.6 1149.2 330 C1150.9 335.4 1152.4 340.4 1153.1 342.5 L1149.2 340.7 C1149.6 342.8 1150.4 346.6 1151.8 353.4 C1153.2 360.2 1156.6 376.8 1157.6 381.5 L1154.2 380.1 C1154.4 385.3 1155.3 402.9 1155.5 411.2 C1155.7 419.5 1155.4 423.2 1155.5 430 C1155.6 436.8 1155.5 445.8 1156 452 C1156.5 458.2 1158.1 464.5 1158.5 467 C1158.9 464.5 1160 457.3 1161 452 C1162 446.7 1163.1 442 1164.5 435 C1165.9 428 1167.8 419.2 1169.5 410 C1171.2 400.8 1173.3 389.4 1174.7 380 C1176.1 370.6 1177 360.1 1177.8 353.4 C1178.6 346.7 1178.8 346.4 1179.3 340 C1179.8 333.6 1180.2 323.3 1180.5 315 C1180.8 306.7 1181.2 300 1180.9 290 C1180.6 280 1180.2 267.2 1178.7 255 C1177.2 242.8 1175.1 228.2 1172 216.7 C1168.9 205.2 1166.1 196.7 1159.9 186 C1153.7 175.3 1143.4 162.2 1134.9 152.7 C1126.4 143.2 1119.2 136.4 1108.8 128.8 C1098.4 121.2 1085.4 112.8 1072.4 106.9 C1059.4 101 1040.5 96.1 1030.7 93.3 C1020.9 90.5 1019.1 91 1013.4 90.2 C1007.7 89.5 1002.1 88.8 996.4 88.8 C990.7 88.8 984.9 89.5 979.3 90.2 C973.7 91 965.4 92.8 962.6 93.3Z"/>
<path fill="#dedfe3" stroke="none" d="M806.7 405.8 C809.4 401.1 817.5 384.6 822.9 377.4 C828.3 370.2 833.8 365.1 839.2 362.5 C844.6 359.9 847 360.9 855.4 361.8 C863.8 362.7 879.1 365.3 889.3 367.9 C899.4 370.5 910.5 374.7 916.3 377.4 C922 380.1 922.9 381.9 923.8 384.2 C924.7 386.4 923.3 389.4 921.8 390.9 C920.3 392.4 920.4 394.1 915 393 C909.6 391.9 899.2 387.2 889.3 384.2 C879.4 381.1 864.2 376.4 855.4 374.7 C846.6 373 841.9 372.4 836.5 374 C831.1 375.6 827.9 378.9 822.9 384.2 C817.9 389.5 809.4 402.2 806.7 405.8Z"/>
<path d="M913.2 432.8 C910 430.5 900.8 421.7 893.7 418.9 C886.6 416.1 878.8 415.8 870.4 416 C862 416.2 851 417.7 843.3 420.2 C835.6 422.7 827.3 429.4 824.1 431.2 C826.8 432.9 832.5 438.9 840.2 441.6 C847.9 444.3 861.5 447.1 870.4 447.3 C879.3 447.5 888 444.6 893.7 442.9 C899.4 441.2 900.7 438.6 904.4 437.2 C908.1 435.8 913.9 435.1 915.8 434.7"/>
<ellipse cx="870.4" cy="431.2" rx="16.4" ry="14" stroke-width="3.6"/>
<ellipse cx="870.4" cy="431.2" rx="5.6" ry="5.2" fill="#dedfe3" stroke="none"/>
<path d="M766.7 446.3 C765 443.9 759.9 434.9 756.5 431.7 C753.1 428.5 748.9 427.6 746.2 427.3 C743.5 427.1 741.7 426.6 740.4 430.2 C739.1 433.8 738.4 440 738.2 449.2 C738 458.4 737.7 475.4 739 485.6 C740.3 495.8 742.6 501.9 746.2 510.4 C749.8 518.9 757.3 530.1 760.8 536.7 C764.3 543.3 764.5 545.3 767.3 550.2 C770.1 555.1 774.3 563.3 777.5 566.3 C780.7 569.3 783.8 568.3 786.3 568.4 C788.8 568.5 791.7 567.2 792.8 567"/>
<path d="M741.5 440.5 C742.9 441.2 747.4 442.8 750 444.5 C752.6 446.2 754.8 448.2 757 450.5 C759.2 452.8 761.2 455.4 763 458 C764.8 460.6 767.2 464.7 768 466"/>
<path d="M751.4 448.4 C751.1 453.4 749.3 469.4 749.9 478.3 C750.5 487.2 752.5 493.5 755 501.7 C757.5 509.9 763.5 523 765.2 527.2"/>
<path d="M763.8 459.4 C762.9 465 758.1 485.6 758.6 492.9 C759.1 500.2 764.8 500.7 766.7 503.1 C768.7 505.5 769.7 504.8 770.3 507.5 C770.9 510.2 769.7 516.8 770.3 519.2 C770.9 521.6 772.5 522.4 774 522.1 C775.5 521.9 778.2 518.4 779.1 517.7"/>
<path d="M821.3 421.4 C825 419.2 835.2 410.9 843.8 408 C852.4 405.1 865.6 404.6 872.9 404 C880.2 403.4 883.8 403.9 887.5 404.6 C891.2 405.3 889.8 404.9 895 408.2 C900.2 411.5 914.9 421.9 918.9 424.6"/>
<path d="M942 416.7 C942.9 419.4 946.4 426.5 947.5 432.9 C948.6 439.3 949.2 447.8 948.8 455 C948.4 462.2 945.9 472.6 945.3 476.1"/>
<path d="M925.2 514.3 C924.3 516.7 920.7 524.2 919.7 528.6 C918.7 533 918.6 536.9 919.1 540.8 C919.6 544.6 920.6 549.1 922.5 551.7 C924.4 554.3 926.8 555.7 930.6 556.5 C934.5 557.3 943.1 556.3 945.6 556.3"/>
<path d="M940.8 509.5 C940.6 510.8 939.8 514.4 939.5 517 C939.2 519.6 938.9 523.8 938.8 525.2"/>
<path d="M948.1 567.7 C947.9 568.9 946.6 572.5 946.7 575 C946.8 577.5 948.5 581.7 948.9 583"/>
<path d="M843.3 670 C843.6 676.7 845.3 695 845 710 C844.7 725 842.8 748.3 841.7 760 C840.6 771.7 840 773 838.3 780 C836.6 787 833.9 794.5 831.7 801.7 C829.5 808.9 826.1 819.5 825 823" stroke-linejoin="miter"/>
<path fill="#dcdde1" stroke="none" d="M825.6 820.9 L824.7 821.1 L823.8 821.4 L822.8 821.7 L821.6 822.1 L820.4 822.4 L819 822.8 L817.5 823.2 L815.8 823.6 L813.8 824 L811.7 824.4 L809.2 824.8 L806.5 825.2 L803.4 825.5 L799.9 825.9 L796.1 826.2 L792 826.6 L787.6 826.9 L783.1 827.3 L778.5 827.6 L773.9 828 L769.4 828.3 L765 828.6 L760.7 828.9 L756.7 829.1 L752.7 829.3 L748.6 829.5 L744.4 829.6 L740.1 829.7 L736 829.7 L731.9 829.8 L728 829.8 L724.3 829.8 L720.9 829.8 L717.9 829.9 L715.4 829.9 L713.3 829.9 L713.3 830.1 L715.4 830.1 L717.9 830.2 L720.9 830.3 L724.3 830.4 L728 830.5 L731.9 830.6 L735.9 830.7 L740.1 830.8 L744.4 830.9 L748.6 830.9 L752.7 830.9 L756.7 830.9 L760.8 830.8 L765.1 830.7 L769.5 830.5 L774.1 830.3 L778.7 830.2 L783.3 829.9 L787.8 829.7 L792.2 829.4 L796.3 829.1 L800.2 828.8 L803.7 828.5 L806.9 828.2 L809.7 827.9 L812.2 827.6 L814.4 827.2 L816.5 826.9 L818.3 826.5 L819.9 826.1 L821.3 825.7 L822.6 825.3 L823.7 825 L824.7 824.7 L825.6 824.5 L826.4 824.3Z"/>
<g transform="translate(1927.0,0) scale(-1,1)">
<path fill="#dedfe3" stroke="none" d="M806.7 405.8 C809.4 401.1 817.5 384.6 822.9 377.4 C828.3 370.2 833.8 365.1 839.2 362.5 C844.6 359.9 847 360.9 855.4 361.8 C863.8 362.7 879.1 365.3 889.3 367.9 C899.4 370.5 910.5 374.7 916.3 377.4 C922 380.1 922.9 381.9 923.8 384.2 C924.7 386.4 923.3 389.4 921.8 390.9 C920.3 392.4 920.4 394.1 915 393 C909.6 391.9 899.2 387.2 889.3 384.2 C879.4 381.1 864.2 376.4 855.4 374.7 C846.6 373 841.9 372.4 836.5 374 C831.1 375.6 827.9 378.9 822.9 384.2 C817.9 389.5 809.4 402.2 806.7 405.8Z"/>
<path d="M913.2 432.8 C910 430.5 900.8 421.7 893.7 418.9 C886.6 416.1 878.8 415.8 870.4 416 C862 416.2 851 417.7 843.3 420.2 C835.6 422.7 827.3 429.4 824.1 431.2 C826.8 432.9 832.5 438.9 840.2 441.6 C847.9 444.3 861.5 447.1 870.4 447.3 C879.3 447.5 888 444.6 893.7 442.9 C899.4 441.2 900.7 438.6 904.4 437.2 C908.1 435.8 913.9 435.1 915.8 434.7"/>
<ellipse cx="870.4" cy="431.2" rx="16.4" ry="14" stroke-width="3.6"/>
<ellipse cx="870.4" cy="431.2" rx="5.6" ry="5.2" fill="#dedfe3" stroke="none"/>
<path d="M766.7 446.3 C765 443.9 759.9 434.9 756.5 431.7 C753.1 428.5 748.9 427.6 746.2 427.3 C743.5 427.1 741.7 426.6 740.4 430.2 C739.1 433.8 738.4 440 738.2 449.2 C738 458.4 737.7 475.4 739 485.6 C740.3 495.8 742.6 501.9 746.2 510.4 C749.8 518.9 757.3 530.1 760.8 536.7 C764.3 543.3 764.5 545.3 767.3 550.2 C770.1 555.1 774.3 563.3 777.5 566.3 C780.7 569.3 783.8 568.3 786.3 568.4 C788.8 568.5 791.7 567.2 792.8 567"/>
<path d="M741.5 440.5 C742.9 441.2 747.4 442.8 750 444.5 C752.6 446.2 754.8 448.2 757 450.5 C759.2 452.8 761.2 455.4 763 458 C764.8 460.6 767.2 464.7 768 466"/>
<path d="M751.4 448.4 C751.1 453.4 749.3 469.4 749.9 478.3 C750.5 487.2 752.5 493.5 755 501.7 C757.5 509.9 763.5 523 765.2 527.2"/>
<path d="M763.8 459.4 C762.9 465 758.1 485.6 758.6 492.9 C759.1 500.2 764.8 500.7 766.7 503.1 C768.7 505.5 769.7 504.8 770.3 507.5 C770.9 510.2 769.7 516.8 770.3 519.2 C770.9 521.6 772.5 522.4 774 522.1 C775.5 521.9 778.2 518.4 779.1 517.7"/>
<path d="M821.3 421.4 C825 419.2 835.2 410.9 843.8 408 C852.4 405.1 865.6 404.6 872.9 404 C880.2 403.4 883.8 403.9 887.5 404.6 C891.2 405.3 889.8 404.9 895 408.2 C900.2 411.5 914.9 421.9 918.9 424.6"/>
<path d="M942 416.7 C942.9 419.4 946.4 426.5 947.5 432.9 C948.6 439.3 949.2 447.8 948.8 455 C948.4 462.2 945.9 472.6 945.3 476.1"/>
<path d="M925.2 514.3 C924.3 516.7 920.7 524.2 919.7 528.6 C918.7 533 918.6 536.9 919.1 540.8 C919.6 544.6 920.6 549.1 922.5 551.7 C924.4 554.3 926.8 555.7 930.6 556.5 C934.5 557.3 943.1 556.3 945.6 556.3"/>
<path d="M940.8 509.5 C940.6 510.8 939.8 514.4 939.5 517 C939.2 519.6 938.9 523.8 938.8 525.2"/>
<path d="M948.1 567.7 C947.9 568.9 946.6 572.5 946.7 575 C946.8 577.5 948.5 581.7 948.9 583"/>
<path d="M843.3 670 C843.6 676.7 845.3 695 845 710 C844.7 725 842.8 748.3 841.7 760 C840.6 771.7 840 773 838.3 780 C836.6 787 833.9 794.5 831.7 801.7 C829.5 808.9 826.1 819.5 825 823" stroke-linejoin="miter"/>
<path fill="#dcdde1" stroke="none" d="M825.6 820.9 L824.7 821.1 L823.8 821.4 L822.8 821.7 L821.6 822.1 L820.4 822.4 L819 822.8 L817.5 823.2 L815.8 823.6 L813.8 824 L811.7 824.4 L809.2 824.8 L806.5 825.2 L803.4 825.5 L799.9 825.9 L796.1 826.2 L792 826.6 L787.6 826.9 L783.1 827.3 L778.5 827.6 L773.9 828 L769.4 828.3 L765 828.6 L760.7 828.9 L756.7 829.1 L752.7 829.3 L748.6 829.5 L744.4 829.6 L740.1 829.7 L736 829.7 L731.9 829.8 L728 829.8 L724.3 829.8 L720.9 829.8 L717.9 829.9 L715.4 829.9 L713.3 829.9 L713.3 830.1 L715.4 830.1 L717.9 830.2 L720.9 830.3 L724.3 830.4 L728 830.5 L731.9 830.6 L735.9 830.7 L740.1 830.8 L744.4 830.9 L748.6 830.9 L752.7 830.9 L756.7 830.9 L760.8 830.8 L765.1 830.7 L769.5 830.5 L774.1 830.3 L778.7 830.2 L783.3 829.9 L787.8 829.7 L792.2 829.4 L796.3 829.1 L800.2 828.8 L803.7 828.5 L806.9 828.2 L809.7 827.9 L812.2 827.6 L814.4 827.2 L816.5 826.9 L818.3 826.5 L819.9 826.1 L821.3 825.7 L822.6 825.3 L823.7 825 L824.7 824.7 L825.6 824.5 L826.4 824.3Z"/>
</g>
<path d="M770 446 C769.9 449.2 768.1 455.7 769.5 465 C770.9 474.3 775.6 491 778.3 501.7 C781 512.4 783.2 519.5 785.6 529.4 C788 539.3 791.3 553.6 792.9 561 C794.5 568.4 793.2 566.8 795 573.5 C796.8 580.2 799.9 591.3 803.8 601.3 C807.7 611.3 813.1 623.5 818.3 633.3 C823.5 643.1 830.5 653.6 835 660 C839.5 666.4 840 666.2 845 671.7 C850 677.2 855.8 685 865 693.3 C874.2 701.6 890.3 715.3 900 721.7 C909.7 728.1 912.7 729.3 923.3 731.7 C933.9 734.1 950.1 736 963.5 736 C976.9 736 993.1 734.1 1003.7 731.7 C1014.3 729.3 1017.3 728.1 1027 721.7 C1036.7 715.3 1052.8 701.6 1062 693.3 C1071.2 685 1077 677.2 1082 671.7 C1087 666.2 1087.5 666.4 1092 660 C1096.5 653.6 1103.5 643.1 1108.7 633.3 C1113.9 623.5 1119.3 611.3 1123.2 601.3 C1127.1 591.3 1130.2 580.2 1132 573.5 C1133.8 566.8 1132.5 568.4 1134.1 561 C1135.7 553.6 1139 539.3 1141.4 529.4 C1143.8 519.5 1146 512.4 1148.7 501.7 C1151.4 491 1156.1 474.3 1157.5 465 C1158.9 455.7 1157.1 449.2 1157 446"/>
<path d="M938.5 551.7 C937.8 550.8 934.6 548.2 934.2 546.5 C933.8 544.8 935.2 542.8 936.3 541.7 C937.4 540.6 939.3 539.8 940.8 540 C942.3 540.2 943.7 541.3 945.3 543 C946.9 544.7 948.6 548.5 950.4 550.4 C952.2 552.3 953.8 553.6 956 554.5 C958.2 555.4 961 555.8 963.5 555.8 C966 555.8 968.8 555.4 971 554.5 C973.2 553.6 974.8 552.3 976.6 550.4 C978.4 548.5 980.1 544.7 981.7 543 C983.3 541.3 984.7 540.2 986.2 540 C987.7 539.8 989.6 540.6 990.7 541.7 C991.8 542.8 993.2 544.8 992.8 546.5 C992.4 548.2 989.2 550.8 988.5 551.7"/>
<path d="M897.2 616 C898.3 617.3 900.9 620.9 903.8 623.6 C906.7 626.3 909.2 628.9 914.7 632.4 C920.2 635.9 928.5 641.7 936.6 644.4 C944.7 647.1 954.5 648.7 963.5 648.7 C972.5 648.7 982.3 647.1 990.4 644.4 C998.5 641.7 1006.8 635.9 1012.3 632.4 C1017.8 628.9 1020.3 626.3 1023.2 623.6 C1026.1 620.9 1028.7 617.3 1029.8 616"/>
<path d="M898 614.5 C901.7 612 912.9 603.6 920.4 599.8 C927.9 596 935.8 592.6 943 591.8 C950.2 590.9 956.7 594.7 963.5 594.7 C970.3 594.7 976.8 590.9 984 591.8 C991.2 592.6 999.1 596 1006.6 599.8 C1014.1 603.6 1025.3 612 1029 614.5 C1026.6 614.8 1022.8 616.3 1014.5 616.3 C1006.2 616.3 988 614.4 979.5 614.6 C971 614.8 968.8 617.5 963.5 617.5 C958.2 617.5 956 614.8 947.5 614.6 C939 614.4 920.8 616.3 912.5 616.3 C904.2 616.3 900.4 614.8 898 614.5Z" stroke-linejoin="miter" stroke-miterlimit="7"/>
<path fill="#dcdde1" stroke="none" d="M845 866.8 L848.1 866.8 L852.1 866.9 L856.8 866.9 L862.2 866.9 L867.9 866.9 L874 867 L880.1 867 L886.2 867.1 L892.1 867.2 L897.5 867.4 L902.4 867.5 L906.7 867.7 L910.3 868 L913.6 868.3 L916.7 868.6 L919.5 868.9 L922.1 869.3 L924.5 869.7 L926.8 870.1 L928.9 870.5 L930.8 870.9 L932.7 871.4 L934.6 871.8 L936.3 872.2 L938 872.7 L939.4 873.2 L940.6 873.6 L941.7 874.2 L942.7 874.7 L943.6 875.2 L944.5 875.7 L945.3 876.3 L946.3 876.8 L947.2 877.3 L948.3 877.8 L949.4 878.3 L950.6 878.7 L951.7 879.1 L952.8 879.5 L953.9 879.9 L955.1 880.3 L956.3 880.7 L957.4 881 L958.6 881.3 L959.8 881.5 L961 881.7 L962.3 881.8 L963.5 881.9 L964.7 881.8 L966 881.7 L967.2 881.5 L968.4 881.3 L969.6 881 L970.7 880.7 L971.9 880.3 L973.1 879.9 L974.2 879.5 L975.3 879.1 L976.4 878.7 L977.6 878.3 L978.7 877.8 L979.8 877.3 L980.7 876.8 L981.7 876.3 L982.5 875.7 L983.4 875.2 L984.3 874.7 L985.3 874.2 L986.4 873.6 L987.6 873.2 L989 872.7 L990.7 872.2 L992.4 871.8 L994.3 871.4 L996.2 870.9 L998.1 870.5 L1000.2 870.1 L1002.5 869.7 L1004.9 869.3 L1007.5 868.9 L1010.3 868.6 L1013.4 868.3 L1016.7 868 L1020.3 867.7 L1024.6 867.5 L1029.5 867.4 L1034.9 867.2 L1040.8 867.1 L1046.9 867 L1053 867 L1059.1 866.9 L1064.8 866.9 L1070.2 866.9 L1074.9 866.9 L1078.9 866.8 L1082 866.8 L1082 866.6 L1078.9 866.5 L1074.9 866.4 L1070.2 866.3 L1064.8 866.2 L1059.1 866 L1053 865.9 L1046.9 865.8 L1040.8 865.7 L1034.9 865.6 L1029.5 865.6 L1024.5 865.6 L1020.3 865.7 L1016.6 865.8 L1013.2 866 L1010.1 866.2 L1007.2 866.5 L1004.5 866.8 L1002.1 867.1 L999.8 867.4 L997.6 867.8 L995.6 868.2 L993.7 868.6 L991.8 869 L989.9 869.4 L988.2 869.8 L986.6 870.3 L985.2 870.8 L984 871.3 L982.8 871.9 L981.8 872.4 L980.9 872.9 L980 873.4 L979.2 873.9 L978.3 874.4 L977.4 874.7 L976.4 875.1 L975.3 875.5 L974.2 875.8 L973.1 876.2 L972 876.6 L970.9 876.9 L969.8 877.2 L968.7 877.5 L967.6 877.7 L966.6 877.9 L965.5 878 L964.5 878.1 L963.5 878.1 L962.5 878.1 L961.5 878 L960.4 877.9 L959.4 877.7 L958.3 877.5 L957.2 877.2 L956.1 876.9 L955 876.6 L953.9 876.2 L952.8 875.8 L951.7 875.5 L950.6 875.1 L949.6 874.7 L948.7 874.4 L947.8 873.9 L947 873.4 L946.1 872.9 L945.2 872.4 L944.2 871.9 L943 871.3 L941.8 870.8 L940.4 870.3 L938.8 869.8 L937.1 869.4 L935.2 869 L933.3 868.6 L931.4 868.2 L929.4 867.8 L927.2 867.4 L924.9 867.1 L922.5 866.8 L919.8 866.5 L916.9 866.2 L913.8 866 L910.4 865.8 L906.7 865.7 L902.5 865.6 L897.5 865.6 L892.1 865.6 L886.2 865.7 L880.1 865.8 L874 865.9 L867.9 866 L862.2 866.2 L856.8 866.3 L852.1 866.4 L848.1 866.5 L845 866.6Z"/>
</g></svg>
<div class="bar top">
<div class="btn " style="left:8px;top:8px;width:49px;">Back</div>
<div class="btn g" style="left:61px;top:8px;width:49px;">Save</div>
<div class="vd" style="left:118px;height:46px"></div>
<div class="btn pd" style="left:128px;top:8px;width:51px;">Undo</div>
<div class="btn pd" style="left:183px;top:8px;width:50px;">Redo</div>
<div class="btn p" style="left:237px;top:8px;width:77px;">Fullscreen</div>
<div class="btn p" style="left:318px;top:8px;width:81px;">Reset view</div>
<div class="vd" style="left:407px;height:46px"></div>
<div class="grp" style="left:417px;top:8px;width:104px"><span style="left:0;width:48px">Draw</span><span class="pu" style="left:48px;width:55px">Select</span></div>
<div class="vd" style="left:529px;height:46px"></div>
<div class="grp" style="left:539px;top:8px;width:79px"><span class="pu" style="left:0;width:39px">Pin</span><span style="left:39px;width:38px">Dot</span></div>
<div class="vd" style="left:627px;height:46px"></div>
<div class="title">Abigail Joness - Procedure #33</div>
<div class="btn " style="left:1702px;top:8px;width:141px;">Procedure Information</div>
<div style="position:absolute;left:1844px;top:4px;width:71px;height:37px;border:4px solid #ec3b3e;border-radius:6px"></div>
<div class="btn " style="left:1848px;top:8px;width:63px;background:#d4d4d4;border-color:#adadad;box-shadow:inset 0 3px 5px rgba(0,0,0,.125)">Settings</div>
</div>
<div class="dd">
<div style="top:14px">Change front picture</div>
<div style="top:51px">Change left picture</div>
<div style="top:88px">Change right picture</div>
<div style="top:143px">Reset view</div>
<div style="top:180px">Clear injections</div>
<hr></div>
<svg width="1920" height="969" style="position:absolute;left:0;top:0;pointer-events:none"><path d="M1589 60 L1721 61.2 L1717.3 55 L1741 63.5 L1717.3 71.8 L1721 65.6 L1589 64.8 Z" fill="#ee3b3b"/></svg>
<div class="tab"><span>OPEN PROCEDURE COMPARISON</span></div>
<div class="bar bot">
<div class="ic" style="left:8px;top:8.6px;width:8px;height:7.6px"></div>
<div class="ic" style="left:8px;top:19.3px;width:8px;height:7.6px"></div>
<div class="ic" style="left:8px;top:30.1px;width:8px;height:7.6px"></div>
<div class="ic" style="left:19px;top:8.6px;width:21px;height:7.6px"></div>
<div class="ic" style="left:19px;top:19.3px;width:21px;height:7.6px"></div>
<div class="ic" style="left:19px;top:30.1px;width:21px;height:7.6px"></div>
<div style="position:absolute;left:48px;top:5px;font-size:14px;line-height:18px;color:#333;white-space:nowrap">Tap the product button to select one<br><span style="color:#f00">No product injected yet</span></div>
<div class="btn " style="left:1211px;top:8px;width:61px;">Display</div>
<div class="vd" style="left:1283px;height:47px"></div>
<div class="btn " style="left:1294px;top:8px;width:112px;">Choose Quantity</div>
<div class="btn " style="left:1410px;top:8px;width:53px;"><i class="glm"></i>0.1</div>
<div class="btn " style="left:1468px;top:8px;width:44px;"><i class="glm"></i>1</div>
<div style="position:absolute;left:1516px;top:9px;width:60px;text-align:center;font-size:13px;line-height:14.5px;color:#333">Quantity<br>N/A</div>
<div class="btn " style="left:1580px;top:8px;width:43px;"><i class="glp"></i>1</div>
<div class="btn " style="left:1628px;top:8px;width:54px;"><i class="glp"></i>0.1</div>
<div class="vd" style="left:1693px;height:47px"></div>
<div class="btn p" style="left:1702px;top:8px;width:81px;">Orientation</div>
<div class="btn p" style="left:1787px;top:8px;width:64px;">Position</div>
<div class="btn r" style="left:1855px;top:8px;width:57px;">Delete</div>
</div>
</body></html>
